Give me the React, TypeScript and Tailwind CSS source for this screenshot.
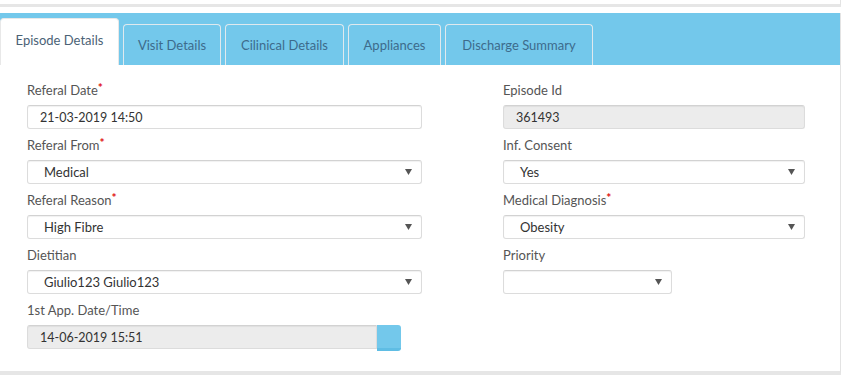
import React from "react";

const font = { fontFamily: "Lato, 'Open Sans', sans-serif" };

function Arrow() {
  return (
    <svg width="7" height="6" viewBox="0 0 7 6" className="absolute right-[9px] top-[8px]">
      <polygon points="0,0 7,0 3.5,6" fill="#555" />
    </svg>
  );
}

function Label({ text, req }: { text: string; req?: boolean }) {
  return (
    <div className="h-[18px] leading-[18px] text-[13px] text-[#555] mb-[6px]">
      {text}
      {req && <span className="text-[#e01010] text-[12px] font-bold relative top-[-3px]">*</span>}
    </div>
  );
}

function TextBox({ value, gray, w }: { value: string; gray?: boolean; w: string }) {
  return (
    <div
      className={`${w} h-[24px] rounded-[3px] border border-[#dcdcdc] border-t-[#d2d2d2] shadow-[inset_0_1px_1px_rgba(0,0,0,0.06)] pl-[12px] pt-[2px] flex items-center text-[12.5px] text-[#333] ${
        gray ? "bg-[#ececec]" : "bg-white"
      }`}
    >
      {value}
    </div>
  );
}

function Select({ value, w }: { value: string; w: string }) {
  return (
    <div
      className={`${w} relative h-[24px] rounded-[3px] border border-[#dcdcdc] border-t-[#d2d2d2] shadow-[inset_0_1px_1px_rgba(0,0,0,0.06)] bg-white pl-[16px] pt-[2px] flex items-center text-[13px] text-[#333]`}
    >
      {value}
      <Arrow />
    </div>
  );
}

function Field({ children, last }: { children: React.ReactNode; last?: boolean }) {
  return <div className={last ? "" : "mb-[7px]"}>{children}</div>;
}

export default function App() {
  const tabs = [
    { t: "Visit Details", w: "w-[98px]" },
    { t: "Cilinical Details", w: "w-[119px]" },
    { t: "Appliances", w: "w-[93px]" },
    { t: "Discharge Summary", w: "w-[148px]" },
  ];
  return (
    <div className="w-[855px] h-[377px] bg-white overflow-hidden" style={font}>
      <div className="w-[841px] h-[7px] border-b-[3px] border-[#e6e6e6] border-r border-r-[#e3e3e3]" />
      <div className="mt-[6px] w-[841px] border-r border-r-[#e3e3e3] border-b-[4px] border-b-[#e6e6e6]">
        <div className="h-[52px] bg-[#73c8eb] flex items-end gap-[4px]">
          <div className="w-[119px] h-[47px] bg-white rounded-t-[4px] border border-b-0 border-[#e8e8e8] flex justify-center pt-[12px] text-[13px] text-[#4b6276]">
            Episode Details
          </div>
          {tabs.map((x) => (
            <div
              key={x.t}
              className={`${x.w} h-[41px] rounded-t-[4px] border border-b-0 border-[#dfe9ee] flex justify-center pt-[11px] text-[13px] text-[#3d6b8b]`}
            >
              {x.t}
            </div>
          ))}
        </div>
        <div className="h-[306px] bg-white pt-[16px] pl-[27px] flex gap-[81px]">
          <div className="w-[395px]">
            <Field>
              <Label text="Referal Date" req />
              <TextBox value="21-03-2019 14:50" w="w-[395px]" />
            </Field>
            <Field>
              <Label text="Referal From" req />
              <Select value="Medical" w="w-[395px]" />
            </Field>
            <Field>
              <Label text="Referal Reason" req />
              <Select value="High Fibre" w="w-[395px]" />
            </Field>
            <Field>
              <Label text="Dietitian" />
              <Select value="Giulio123 Giulio123" w="w-[395px]" />
            </Field>
            <Field last>
              <Label text="1st App. Date/Time" />
              <div className="flex items-start">
                <div className="w-[350px] h-[24px] rounded-l-[3px] border border-[#dcdcdc] border-t-[#d2d2d2] shadow-[inset_0_1px_1px_rgba(0,0,0,0.06)] bg-[#ececec] pl-[12px] pt-[2px] flex items-center text-[12.5px] text-[#333]">
                  14-06-2019 15:51
                </div>
                <div className="w-[24px] h-[26px] bg-[#73c8eb] border-b-[3px] border-[#5fbde4] rounded-r-[3px]" />
              </div>
            </Field>
          </div>
          <div className="w-[302px]">
            <Field>
              <Label text="Episode Id" />
              <TextBox value="361493" gray w="w-[302px]" />
            </Field>
            <Field>
              <Label text="Inf. Consent" />
              <Select value="Yes" w="w-[302px]" />
            </Field>
            <Field>
              <Label text="Medical Diagnosis" req />
              <Select value="Obesity" w="w-[302px]" />
            </Field>
            <Field>
              <Label text="Priority" />
              <Select value="" w="w-[169px]" />
            </Field>
          </div>
        </div>
      </div>
    </div>
  );
}
